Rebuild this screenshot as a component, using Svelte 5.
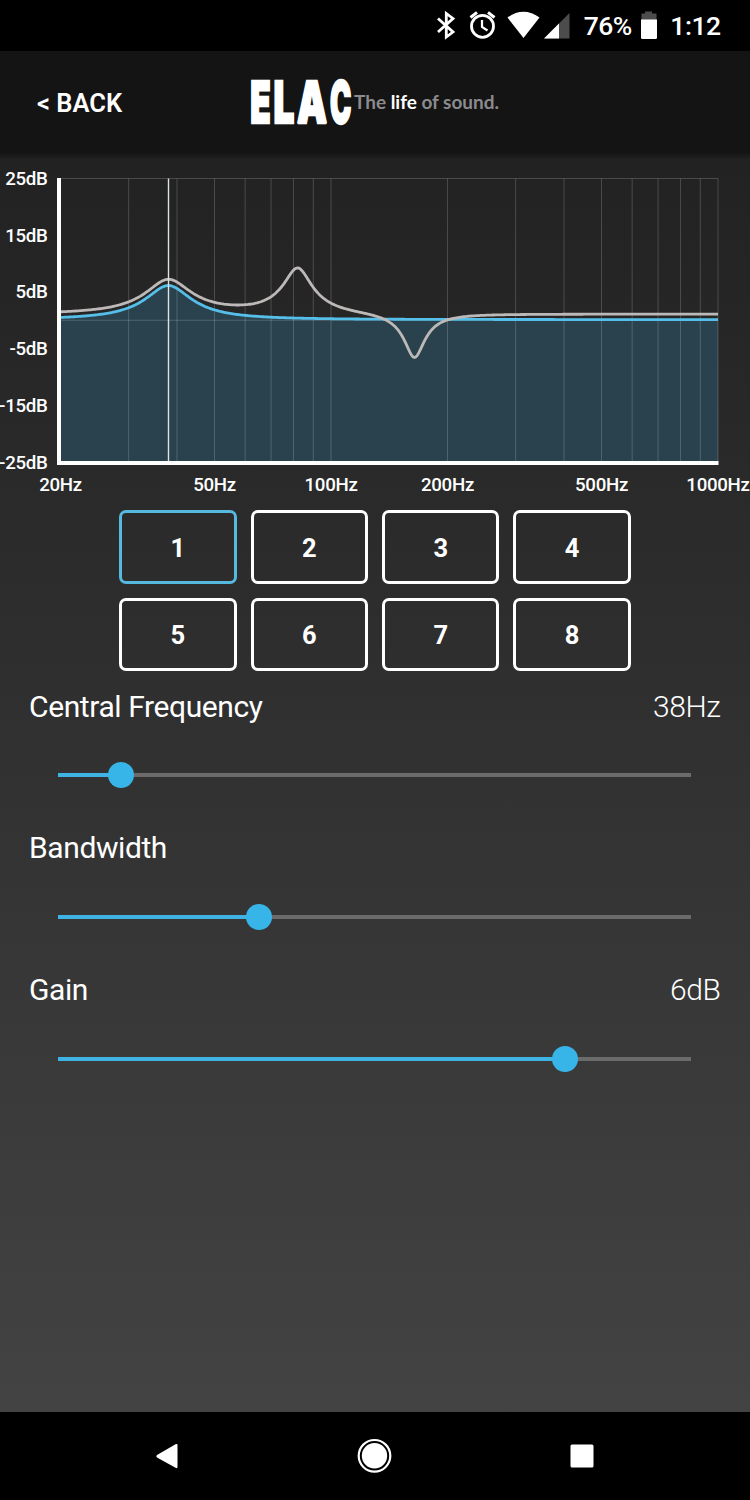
<script>
  const minFreq = 20;
  const maxFreq = 1000;
  const plot = { left: 60.5, right: 718, top: 25.5, bottom: 309 };

  const gridLines = [30, 40, 50, 60, 70, 80, 90, 100, 200, 300, 400, 500, 600, 700, 800, 900, 1000];
  const freqLabels = [20, 50, 100, 200, 500, 1000];
  const dbLabels = [25, 15, 5, -5, -15, -25];

  const bands = [
    { freq: 38, gain: 6, q: 2.9 },
    { freq: 82, gain: 8, q: 4.5 },
    { freq: 164.3, gain: -7.9, q: 6.4 },
  ];

  let selected = $state(1);

  let sliders = $state([
    { name: "Central Frequency", value: "38Hz", percent: 10 },
    { name: "Bandwidth", value: "", percent: 31.7 },
    { name: "Gain", value: "6dB", percent: 80.1 },
  ]);

  function xOf(freq) {
    const ratio = Math.log(freq / minFreq) / Math.log(maxFreq / minFreq);
    return plot.left + ratio * (plot.right - plot.left);
  }

  function yOf(db) {
    return plot.top + ((25 - db) / 50) * (plot.bottom - plot.top);
  }

  // peaking filter response in dB
  function response(band, freq) {
    const w2 = (freq / band.freq) ** 2;
    const a2 = 10 ** (band.gain / 20);
    const k = 1 / band.q ** 2;
    const base = (1 - w2) ** 2;
    return 10 * Math.log10((base + a2 * w2 * k) / (base + (w2 * k) / a2));
  }

  function curve(fn) {
    const points = [];
    for (let x = plot.left; x <= plot.right; x += 1.5) {
      const ratio = (x - plot.left) / (plot.right - plot.left);
      const freq = minFreq * (maxFreq / minFreq) ** ratio;
      points.push(`${x.toFixed(1)},${yOf(fn(freq)).toFixed(2)}`);
    }
    points.push(`${plot.right},${yOf(fn(maxFreq)).toFixed(2)}`);
    return points.join(" ");
  }

  const bandCurve = curve((f) => response(bands[0], f) + 0.12);
  const totalCurve = curve((f) => 1.08 + bands.reduce((sum, b) => sum + response(b, f), 0));
  const area = `${plot.left},${plot.bottom} ${bandCurve} ${plot.right},${plot.bottom}`;
</script>

<div class="screen">
  <div class="status">
    <svg class="icons" width="150" height="51" viewBox="0 0 150 51">
      <path d="M18 18.5 L33 32 L26.3 37 V13.5 L33 18.5 L18 32" fill="none" stroke="#fff" stroke-width="2.8" />
      <g fill="none" stroke="#fff">
        <circle cx="62.5" cy="26.3" r="11" stroke-width="2.8" />
        <path d="M62 20 V27 L67.5 30.5" stroke-width="2.2" />
        <path d="M50.5 17.5 L57 12.3 M68 12.3 L74.5 17.5" stroke-width="3" />
      </g>
      <path d="M87.5 17.5 Q103.5 6 119.5 17.5 L103.5 38 Z" fill="#fff" />
      <path d="M149.5 13 V38.5 H124 Z" fill="#4c4c4c" />
      <path d="M139 23.5 V38.5 H124 Z" fill="#fff" />
    </svg>
    <span class="battery-text">76%</span>
    <svg class="battery" width="18" height="51" viewBox="0 0 18 51">
      <path d="M1.5 13.5 H5 V11.5 H12 V13.5 H16.5 V20 H1.5 Z" fill="#4c4c4c" />
      <path d="M1 19.5 H17 V37.5 Q17 39 15.5 39 H2.5 Q1 39 1 37.5 Z" fill="#fff" />
    </svg>
    <span class="clock">1:12</span>
  </div>

  <header>
    <button class="back">&lt; BACK</button>
    <svg class="logo" width="252" height="102" viewBox="0 0 252 102">
      <g class="brand">
        <text x="1.3" y="72" textLength="20.4" lengthAdjust="spacingAndGlyphs">E</text>
        <text x="24.5" y="72" textLength="20.8" lengthAdjust="spacingAndGlyphs">L</text>
        <text x="48" y="72" textLength="30" lengthAdjust="spacingAndGlyphs">A</text>
        <text x="81" y="72" textLength="21.3" lengthAdjust="spacingAndGlyphs">C</text>
      </g>
      <text class="tagline" x="105" y="57.5" textLength="145" lengthAdjust="spacingAndGlyphs">The <tspan>life</tspan> of sound.</text>
    </svg>
  </header>

  <main>
    <svg class="chart" width="750" height="349" viewBox="0 0 750 349">
      <polygon points={area} fill="#2a424d" />
      <g class="grid">
        <line x1={plot.left} y1={plot.top} x2={plot.right} y2={plot.top} />
        <line x1={plot.left} y1={yOf(0)} x2={plot.right} y2={yOf(0)} />
        {#each gridLines as freq}
          <line x1={xOf(freq)} y1={plot.top} x2={xOf(freq)} y2={plot.bottom} />
        {/each}
      </g>
      <polyline points={bandCurve} stroke="#55bfe9" />
      <polyline points={totalCurve} stroke="#bdb9b8" />
      <line class="cursor" x1="168.5" y1={plot.top} x2="168.5" y2={plot.bottom} />
      <path class="axis" d="M59 25 V310 H718.5" />
      {#each dbLabels as db}
        <text x="47.5" y={yOf(db) + 6.5} text-anchor="end">{db}dB</text>
      {/each}
      {#each freqLabels as freq}
        <text x={xOf(freq)} y="338" text-anchor="middle">{freq}Hz</text>
      {/each}
    </svg>

    <div class="bands">
      {#each [1, 2, 3, 4, 5, 6, 7, 8] as n}
        <button class:active={selected === n} onclick={() => (selected = n)}>{n}</button>
      {/each}
    </div>

    {#each sliders as slider}
      <section>
        <div class="label">
          <span>{slider.name}</span>
          <span class="value">{slider.value}</span>
        </div>
        <div class="track">
          <div class="fill" style="width: {slider.percent}%"></div>
          <div class="thumb"></div>
        </div>
      </section>
    {/each}
  </main>

  <nav>
    <svg width="750" height="88" viewBox="0 0 750 88">
      <g fill="#fff">
        <path d="M157 43 L176 32 Q177.5 31.5 177.5 33 V55 Q177.5 56.5 176 56 L157 45.5 Q155.5 44.3 157 43 Z" />
        <circle cx="374.5" cy="43.8" r="12.7" />
        <circle cx="374.5" cy="43.8" r="15.8" fill="none" stroke="#fff" stroke-width="2.2" />
        <rect x="570.5" y="32.5" width="23" height="23" rx="1.5" />
      </g>
    </svg>
  </nav>
</div>

<style>
  :global(body) {
    margin: 0;
    background: #000;
  }

  .screen {
    width: 750px;
    height: 1500px;
    display: flex;
    flex-direction: column;
    overflow: hidden;
    background: #000;
    color: #fff;
    font-family: Roboto, sans-serif;
  }

  .status {
    height: 51px;
    display: flex;
    align-items: center;
    justify-content: flex-end;
    box-sizing: border-box;
    padding-right: 29.5px;
    font-size: 26.5px;
    font-weight: 500;
    letter-spacing: -0.5px;
  }

  .battery-text {
    margin-left: 14px;
  }

  .battery {
    margin: 0 12.5px 0 8px;
  }

  header {
    height: 102px;
    display: grid;
    grid-template-columns: 249px 252px 1fr;
    align-items: center;
    background: #141414;
  }

  button {
    padding: 0;
    background: none;
    color: inherit;
    font-family: inherit;
    cursor: pointer;
  }

  .back {
    border: none;
    padding: 2px 0 0 37px;
    text-align: left;
    font-size: 25.5px;
    font-weight: 600;
  }

  .brand text {
    font-family: Inter, sans-serif;
    font-size: 58px;
    font-weight: 900;
    fill: #fff;
    stroke: #fff;
    stroke-width: 2.4px;
    stroke-miterlimit: 1.5;
  }

  .tagline {
    font-family: Lato, sans-serif;
    font-size: 19px;
    font-weight: 700;
    fill: #8b8b8e;
  }

  .tagline tspan {
    fill: #fff;
  }

  main {
    height: 1259px;
    background:
      linear-gradient(#161616, transparent) top / 100% 7px no-repeat,
      linear-gradient(#222, #2d2d2d 36%, #434343);
  }

  .chart {
    display: block;
  }

  .chart text {
    font-size: 18.7px;
    font-weight: 500;
    letter-spacing: -0.3px;
    fill: #fff;
  }

  .grid line {
    stroke: #fff;
    stroke-opacity: 0.18;
  }

  .chart polyline {
    fill: none;
    stroke-width: 2.8;
  }

  .cursor {
    stroke: #dbe4e4;
    stroke-width: 1.4;
  }

  .axis {
    fill: none;
    stroke: #fff;
    stroke-width: 4;
  }

  .bands {
    display: grid;
    grid-template-columns: repeat(4, 117.4px);
    grid-auto-rows: 73.5px;
    gap: 14px;
    justify-content: center;
    margin: 8px 0 19.5px;
  }

  .bands button {
    border: 3px solid #fff;
    border-radius: 7px;
    padding-top: 2px;
    font-size: 25.5px;
    font-weight: 700;
  }

  .bands button.active {
    border-color: #55b9e0;
  }

  section {
    height: 141.7px;
  }

  .label {
    display: flex;
    justify-content: space-between;
    padding: 0 29.5px 0 29px;
    line-height: 32px;
    font-size: 30px;
    letter-spacing: -0.4px;
  }

  .value {
    font-weight: 300;
  }

  .track {
    height: 4px;
    display: flex;
    align-items: center;
    margin: 50.9px 59px 0 58px;
    background: #6b6b6b;
  }

  .fill {
    height: 4px;
    background: #3fb3e3;
  }

  .thumb {
    flex: none;
    width: 26px;
    height: 26px;
    margin-left: -13px;
    border-radius: 50%;
    background: #37b5e8;
  }

  nav {
    height: 88px;
  }
</style>
